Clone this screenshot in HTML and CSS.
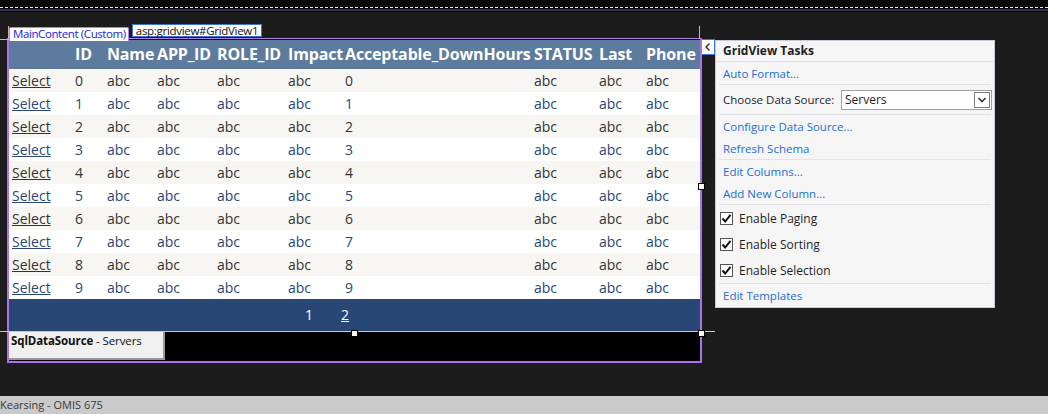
FILE: index.html
```html
<!DOCTYPE html>
<html lang="en">
<head>
  <meta charset="UTF-8">
  <title>GridView Designer</title>
  <link rel="stylesheet" href="styles.css">
</head>
<body>

  <div class="topband">
    <div class="dashline"></div>
    <div class="purpleline"></div>
  </div>

  <div class="canvas">
    <div class="design-col">
      <div class="tags">
        <span class="tag-content">MainContent (Custom)</span>
        <span class="tag-grid">asp:gridview#GridView1</span>
      </div>

      <div class="design">
        <div class="grid-wrap">
          <table class="grid">
            <colgroup>
              <col style="width:63px"><col style="width:32px"><col style="width:50px"><col style="width:60px"><col style="width:71px">
              <col style="width:57px"><col style="width:189px"><col style="width:65px"><col style="width:47px"><col style="width:57px">
            </colgroup>
            <thead>
              <tr>
                <th></th><th>ID</th><th>Name</th><th>APP_ID</th><th>ROLE_ID</th><th>Impact</th><th>Acceptable_DownHours</th><th>STATUS</th><th>Last</th><th>Phone</th>
              </tr>
            </thead>
            <tbody>
              <tr class="alt"><td><a href="#">Select</a></td><td>0</td><td>abc</td><td>abc</td><td>abc</td><td>abc</td><td>0</td><td>abc</td><td>abc</td><td>abc</td></tr>
              <tr><td><a href="#">Select</a></td><td>1</td><td>abc</td><td>abc</td><td>abc</td><td>abc</td><td>1</td><td>abc</td><td>abc</td><td>abc</td></tr>
              <tr class="alt"><td><a href="#">Select</a></td><td>2</td><td>abc</td><td>abc</td><td>abc</td><td>abc</td><td>2</td><td>abc</td><td>abc</td><td>abc</td></tr>
              <tr><td><a href="#">Select</a></td><td>3</td><td>abc</td><td>abc</td><td>abc</td><td>abc</td><td>3</td><td>abc</td><td>abc</td><td>abc</td></tr>
              <tr class="alt"><td><a href="#">Select</a></td><td>4</td><td>abc</td><td>abc</td><td>abc</td><td>abc</td><td>4</td><td>abc</td><td>abc</td><td>abc</td></tr>
              <tr><td><a href="#">Select</a></td><td>5</td><td>abc</td><td>abc</td><td>abc</td><td>abc</td><td>5</td><td>abc</td><td>abc</td><td>abc</td></tr>
              <tr class="alt"><td><a href="#">Select</a></td><td>6</td><td>abc</td><td>abc</td><td>abc</td><td>abc</td><td>6</td><td>abc</td><td>abc</td><td>abc</td></tr>
              <tr><td><a href="#">Select</a></td><td>7</td><td>abc</td><td>abc</td><td>abc</td><td>abc</td><td>7</td><td>abc</td><td>abc</td><td>abc</td></tr>
              <tr class="alt"><td><a href="#">Select</a></td><td>8</td><td>abc</td><td>abc</td><td>abc</td><td>abc</td><td>8</td><td>abc</td><td>abc</td><td>abc</td></tr>
              <tr><td><a href="#">Select</a></td><td>9</td><td>abc</td><td>abc</td><td>abc</td><td>abc</td><td>9</td><td>abc</td><td>abc</td><td>abc</td></tr>
            </tbody>
            <tfoot>
              <tr class="pager">
                <td colspan="10"><div class="pages"><span>1</span><a href="#">2</a></div></td>
              </tr>
            </tfoot>
          </table>
          <span class="handle h-right"></span>
          <span class="handle h-bottom"></span>
          <span class="handle h-corner"></span>
        </div>

        <div class="datasource">
          <div class="ds-box"><b>SqlDataSource</b> - Servers</div>
        </div>
      </div>
    </div>

    <div class="smarttag">
      <svg width="8" height="10" viewBox="0 0 8 10"><polyline points="5.5,1.5 2,5 5.5,8.5" fill="none" stroke="#222" stroke-width="1.3"/></svg>
    </div>

    <div class="tasks">
      <div class="tasks-title">GridView Tasks</div>
      <div class="task-row"><a href="#">Auto Format...</a></div>
      <div class="sep"></div>
      <div class="task-row source-row">
        <span class="label source-label">Choose Data Source:</span>
        <div class="dropdown">
          <span>Servers</span>
          <span class="dd-btn">
            <svg width="10" height="8" viewBox="0 0 10 8"><polyline points="1.5,2 5,5.5 8.5,2" fill="none" stroke="#333" stroke-width="1.6"/></svg>
          </span>
        </div>
      </div>
      <div class="sep"></div>
      <div class="task-row"><a href="#">Configure Data Source...</a></div>
      <div class="task-row"><a href="#">Refresh Schema</a></div>
      <div class="sep"></div>
      <div class="task-row"><a href="#">Edit Columns...</a></div>
      <div class="task-row"><a href="#">Add New Column...</a></div>
      <div class="sep"></div>
      <div class="task-row check-row">
        <span class="check"><svg width="11" height="11" viewBox="0 0 11 11"><path d="M1.5 5.5 L4.2 8.5 L9.5 1.8" fill="none" stroke="#111" stroke-width="2"/></svg></span>
        <span class="label">Enable Paging</span>
      </div>
      <div class="task-row check-row">
        <span class="check"><svg width="11" height="11" viewBox="0 0 11 11"><path d="M1.5 5.5 L4.2 8.5 L9.5 1.8" fill="none" stroke="#111" stroke-width="2"/></svg></span>
        <span class="label">Enable Sorting</span>
      </div>
      <div class="task-row check-row">
        <span class="check"><svg width="11" height="11" viewBox="0 0 11 11"><path d="M1.5 5.5 L4.2 8.5 L9.5 1.8" fill="none" stroke="#111" stroke-width="2"/></svg></span>
        <span class="label">Enable Selection</span>
      </div>
      <div class="sep"></div>
      <div class="task-row"><a href="#">Edit Templates</a></div>
    </div>
  </div>

  <div class="statusbar">Kearsing - OMIS 675</div>

</body>
</html>
```

FILE: styles.css
```css
html, body {
  margin: 0;
  padding: 0;
}
body {
  width: 1048px;
  height: 414px;
  overflow: hidden;
  background: #1c1c1c;
  font-family: "Open Sans", "Noto Sans", sans-serif;
  display: flex;
  flex-direction: column;
}
a {
  color: inherit;
}

/* top strip */
.topband {
  height: 12px;
  background: #0a0a0a;
  padding-top: 7px;
  box-sizing: border-box;
}
.dashline {
  height: 0;
  border-top: 1px dashed #e8e8e8;
}
.purpleline {
  margin-top: 1px;
  height: 2px;
  background: #3b2a50;
}

/* design surface */
.canvas {
  flex: 1;
  display: flex;
  align-items: flex-start;
  padding: 12px 0 0 7px;
}
.design-col {
  width: 695px;
  position: relative;
}
/* alignment guides at the top corners */
.design-col::before,
.design-col::after {
  content: "";
  position: absolute;
  top: 2px;
  width: 1px;
  height: 13px;
  background: #c9b3c3;
}
.design-col::before {
  left: 1px;
}
.design-col::after {
  right: 2px;
}
.tags {
  height: 14px;
  display: flex;
  align-items: flex-start;
  padding-left: 2px;
  gap: 3px;
  font-size: 11.5px;
  line-height: 12px;
  position: relative;
  z-index: 1;
}
.tags::before {
  content: "";
  position: absolute;
  left: -7px;
  top: 15px;
  width: 9px;
  height: 1px;
  background: #c9b3c3;
}
.tag-content {
  margin-top: 3px;
  height: 13px;
  padding: 0 2px 0 3px;
  background: #fff;
  color: #2222dd;
  border: 1px solid #b77fe6;
  border-bottom: none;
  border-radius: 2px 2px 0 0;
  letter-spacing: -0.4px;
}
.tag-grid {
  height: 11px;
  padding: 0 3px 0 3px;
  background: #fff;
  color: #111;
  border: 1px solid #3e74d0;
  letter-spacing: -0.3px;
}
.design {
  border: 2px solid #ac72ea;
  border-top: 1px solid #b77fe6;
  padding-top: 1px;
  background: #000;
}
.grid-wrap {
  position: relative;
}
.grid-wrap::after {
  content: "";
  position: absolute;
  left: -9px;
  right: -15px;
  bottom: 0;
  height: 1px;
  background: #dcbcc4;
}
.grid {
  border-collapse: collapse;
  table-layout: fixed;
  width: 691px;
  font-size: 14px;
  white-space: nowrap;
}
.grid th {
  height: 28px;
  padding: 0 0 1px 3px;
  background: #5d7b9d;
  color: #fff;
  font-size: 16px;
  font-weight: bold;
  text-align: left;
  letter-spacing: -0.15px;
  overflow: visible;
}
.grid td {
  height: 23px;
  padding: 0 0 0 3px;
  background: #fff;
  color: #284775;
}
.grid tr.alt td {
  background: #f7f6f3;
  color: #333;
}
.grid tr.pager td {
  height: 33px;
  background: #284775;
  color: #fff;
}
.pages {
  display: flex;
  gap: 28px;
  padding-left: 293px;
  padding-bottom: 2px;
}
.handle {
  position: absolute;
  width: 5px;
  height: 5px;
  background: #fff;
  border: 1px solid #000;
  z-index: 1;
}
.h-right {
  right: -5px;
  top: 143px;
}
.h-bottom {
  left: 342px;
  bottom: -5px;
}
.h-corner {
  right: -5px;
  bottom: -5px;
}
.datasource {
  height: 29px;
}
.ds-box {
  width: 156px;
  height: 28px;
  padding: 1px 0 0 2px;
  box-sizing: border-box;
  background: #f0f0f0;
  border-right: 2px solid #9a9a9a;
  border-bottom: 2px solid #9a9a9a;
  font-size: 11.5px;
  color: #111;
  letter-spacing: -0.1px;
}

/* smart tag */
.smarttag {
  margin: 15px 0 0 -1px;
  width: 12px;
  height: 14px;
  background: #fff;
  border: 1px solid #3e74d0;
  display: flex;
  align-items: center;
  justify-content: center;
}

/* tasks panel */
.tasks {
  margin-top: 16px;
  width: 280px;
  box-sizing: border-box;
  background: #f5f5f6;
  border: 1px solid #c9c9d6;
  font-size: 11.5px;
  color: #1e1e1e;
  padding-bottom: 1px;
}
.tasks-title {
  height: 20px;
  line-height: 20px;
  padding-left: 7px;
  font-weight: bold;
  font-size: 12px;
  border-bottom: 1px solid #e2e2e6;
}
.task-row {
  height: 22px;
  display: flex;
  align-items: center;
  padding-left: 7px;
  white-space: nowrap;
}
.task-row a {
  color: #1f6fd0;
  text-decoration: none;
}
.sep {
  height: 1px;
  margin: 0 3px;
  background: #e2e2e6;
}
.source-row {
  height: 29px;
}
.source-label {
  flex: none;
  width: 118px;
}
.dropdown {
  width: 151px;
  height: 20px;
  box-sizing: border-box;
  border: 1px solid #a0a0a0;
  background: #fff;
  display: flex;
  align-items: center;
  justify-content: space-between;
  padding: 0 1px 0 3px;
  font-size: 12px;
}
.dd-btn {
  width: 16px;
  height: 16px;
  box-sizing: border-box;
  border: 1px solid #7a7a7a;
  display: flex;
  align-items: center;
  justify-content: center;
}
.check-row {
  height: 26px;
  padding-left: 4px;
}
.check {
  width: 13px;
  height: 13px;
  box-sizing: border-box;
  border: 1px solid #555;
  background: #fff;
  display: flex;
  align-items: center;
  justify-content: center;
  margin-right: 6px;
}
.check-row .label {
  font-size: 12px;
}

/* status bar */
.statusbar {
  height: 18px;
  background: #cacaca;
  color: #3a3a3a;
  font-size: 11px;
  line-height: 18px;
}
```
